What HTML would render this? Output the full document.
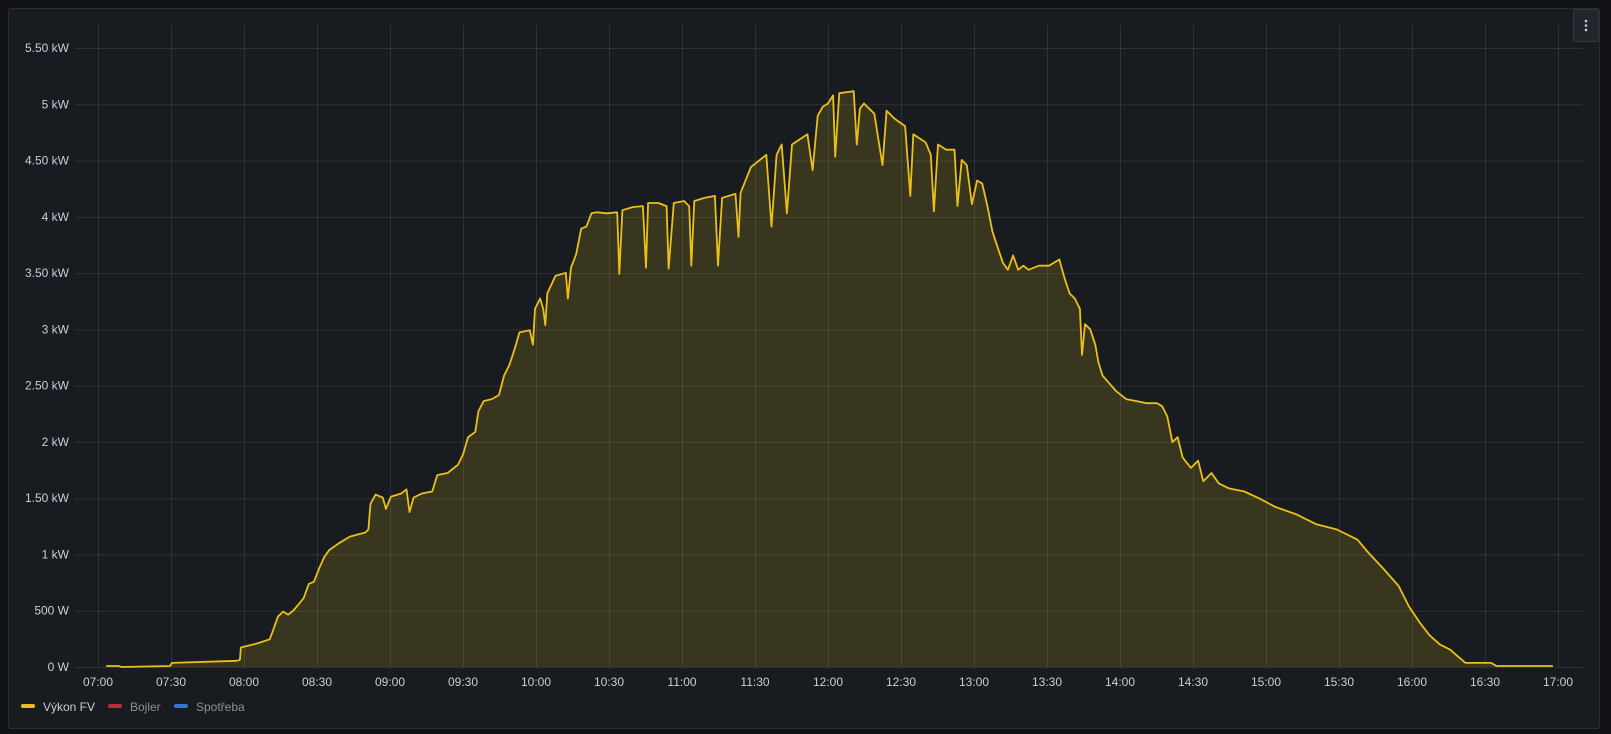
<!DOCTYPE html>
<html><head><meta charset="utf-8"><style>
html,body{margin:0;padding:0;background:#111217;width:1611px;height:734px;overflow:hidden;font-family:"Liberation Sans",sans-serif}
</style></head><body>
<svg width="1611" height="734" xmlns="http://www.w3.org/2000/svg" style="position:absolute;left:0;top:0">
<rect x="8.5" y="8.5" width="1591" height="720" rx="2" fill="#181b1f" stroke="#2a2d33"/>
<g id="grid" stroke="rgba(204,204,220,0.12)" stroke-width="1"></g>
<g id="labels" fill="#ccccdc" font-size="12"></g>
<path id="area" fill="rgba(218,190,30,0.17)" stroke="none"/>
<path id="line" fill="none" stroke="#eac018" stroke-width="1.8" stroke-linejoin="round"/>
<rect x="1573.5" y="9.5" width="25" height="32" rx="2" fill="#22252b" stroke="#34373d"/>
<circle cx="1586" cy="21" r="1.3" fill="#ccccdc"/><circle cx="1586" cy="25.5" r="1.3" fill="#ccccdc"/><circle cx="1586" cy="30" r="1.3" fill="#ccccdc"/>
<rect x="21" y="704" width="14" height="4" rx="2" fill="#eac018"/>
<text x="43" y="711" font-size="12" fill="#ccccdc">Výkon FV</text>
<rect x="108" y="704" width="14" height="4" rx="2" fill="#c4283b"/>
<text x="130" y="711" font-size="12" fill="#8e8e98">Bojler</text>
<rect x="174" y="704" width="14" height="4" rx="2" fill="#3274d9"/>
<text x="196" y="711" font-size="12" fill="#8e8e98">Spotřeba</text>
</svg>
<script>
var ns="http://www.w3.org/2000/svg";
var g=document.getElementById('grid'),L=document.getElementById('labels');
function el(p,t,a,txt){var e=document.createElementNS(ns,t);for(var k in a)e.setAttribute(k,a[k]);if(txt)e.textContent=txt;p.appendChild(e);}
var yl=["0 W","500 W","1 kW","1.50 kW","2 kW","2.50 kW","3 kW","3.50 kW","4 kW","4.50 kW","5 kW","5.50 kW"];
for(var i=0;i<12;i++){var y=667-i*56.27;el(g,'line',{x1:75,x2:1583,y1:y+.5,y2:y+.5});el(L,'text',{x:69,y:y+4,'text-anchor':'end'},yl[i]);}
var xl=["07:00","07:30","08:00","08:30","09:00","09:30","10:00","10:30","11:00","11:30","12:00","12:30","13:00","13:30","14:00","14:30","15:00","15:30","16:00","16:30","17:00"];
for(var i=0;i<21;i++){var x=98+i*73;el(g,'line',{x1:x+.5,x2:x+.5,y1:25,y2:667});el(L,'text',{x:x,y:686,'text-anchor':'middle'},xl[i]);}
var P=[[103,648],[115,648],[118,649],[165,648],[167,645],[230,643],[233,642],[234,630],[250,626],[262,622],[265,614],[270,600],[275,595],[280,598],[285,594],[290,588],[295,582],[300,568],[305,566],[310,553],[315,542],[320,535],[330,528],[340,522],[355,518],[358,515],[360,490],[365,481],[372,484],[375,495],[380,483],[390,480],[395,476],[398,498],[402,484],[410,480],[420,478],[425,462],[435,460],[445,452],[450,442],[455,425],[462,420],[465,400],[470,390],[478,388],[485,384],[490,365],[495,355],[500,340],[505,323],[515,321],[518,335],[520,300],[525,290],[528,300],[530,316],[532,285],[540,268],[550,265],[552,290],[555,260],[560,247],[565,222],[570,220],[575,207],[580,206],[590,207],[600,206],[602,266],[605,204],[615,201],[625,200],[628,260],[630,197],[640,197],[648,200],[650,261],[655,197],[665,195],[670,200],[672,258],[675,195],[685,192],[695,190],[698,258],[702,192],[715,188],[718,230],[720,187],[730,162],[745,150],[750,220],[755,150],[760,140],[765,207],[770,140],[785,130],[790,165],[795,112],[800,103],[805,100],[810,92],[812,152],[816,90],[830,88],[833,140],[836,105],[840,100],[850,110],[858,160],[862,107],[870,115],[880,122],[885,190],[888,130],[900,138],[905,150],[908,205],[912,140],[920,145],[928,145],[931,200],[935,155],[940,160],[945,198],[950,175],[955,178],[960,200],[965,225],[970,240],[975,255],[980,262],[985,248],[990,262],[995,258],[1000,262],[1010,258],[1020,258],[1030,252],[1035,270],[1040,285],[1045,290],[1050,300],[1052,345],[1055,315],[1060,320],[1065,335],[1068,352],[1072,365],[1078,372],[1085,380],[1095,388],[1105,390],[1115,392],[1125,392],[1130,395],[1135,405],[1140,430],[1145,425],[1150,445],[1158,455],[1165,448],[1170,468],[1178,460],[1185,470],[1195,475],[1210,478],[1225,485],[1240,493],[1260,500],[1280,510],[1300,515],[1320,525],[1330,537],[1345,553],[1360,570],[1370,590],[1380,605],[1390,618],[1400,627],[1410,632],[1425,645],[1450,645],[1455,648],[1510,648]];
var d="",X0,Xn;
P.forEach(function(p,i){var x=98+(p[0]-95)*146/142,y=667-(649-p[1])*112.5/109.6;if(i==0)X0=x;Xn=x;d+=(i?"L":"M")+x.toFixed(1)+","+y.toFixed(1);});
document.getElementById('line').setAttribute('d',d);
document.getElementById('area').setAttribute('d',d+"L"+Xn.toFixed(1)+",667L"+X0.toFixed(1)+",667Z");
</script>
</body></html>
